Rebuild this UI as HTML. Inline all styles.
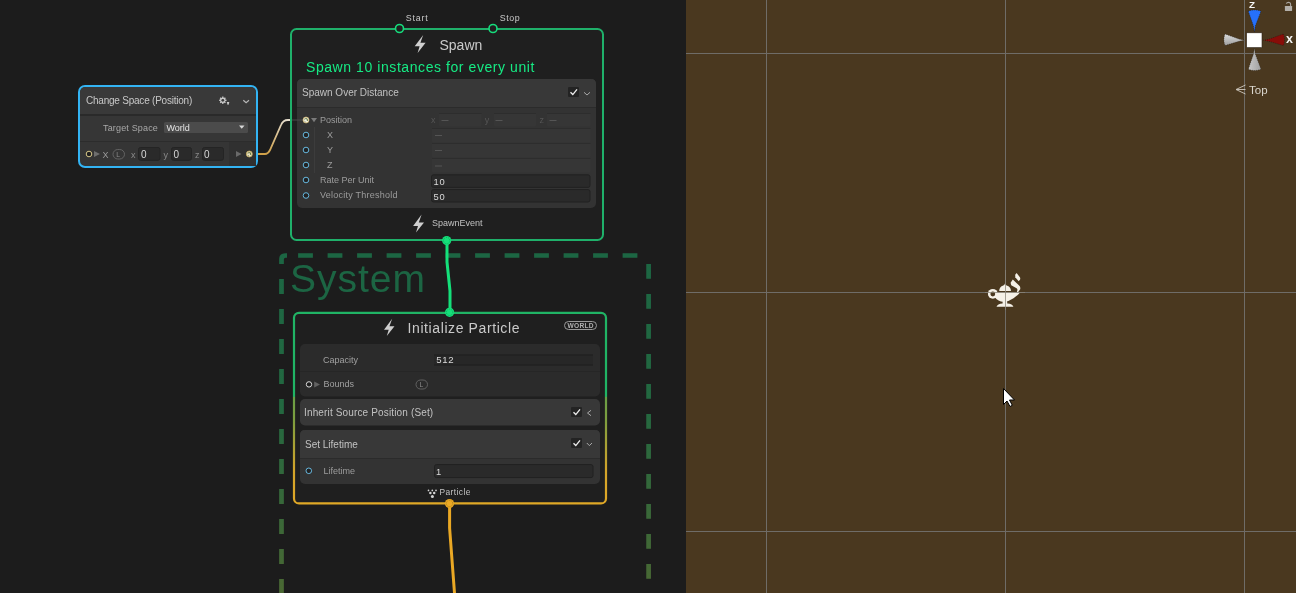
<!DOCTYPE html>
<html><head><meta charset="utf-8">
<style>
html,body{margin:0;padding:0;width:1296px;height:593px;overflow:hidden;background:#1c1c1c;}
svg{display:block;font-family:"Liberation Sans",sans-serif;-webkit-font-smoothing:antialiased;will-change:transform;}
</style></head>
<body>
<svg width="1296" height="593" viewBox="0 0 1296 593">
<defs>
  <linearGradient id="wireCS" x1="0" y1="154" x2="0" y2="120" gradientUnits="userSpaceOnUse">
    <stop offset="0" stop-color="#cfa048"/><stop offset="1" stop-color="#e4dccb"/>
  </linearGradient>
  <linearGradient id="initBorder" x1="0" y1="311" x2="0" y2="505" gradientUnits="userSpaceOnUse">
    <stop offset="0.44" stop-color="#20b465"/>
    <stop offset="0.445" stop-color="#6a9e45"/>
    <stop offset="0.56" stop-color="#7d9e3f"/>
    <stop offset="0.82" stop-color="#d3a42a"/>
    <stop offset="1" stop-color="#e0a826"/>
  </linearGradient>
  <linearGradient id="sysBorderL" x1="0" y1="253" x2="0" y2="593" gradientUnits="userSpaceOnUse">
    <stop offset="0" stop-color="#1c6643"/><stop offset="0.45" stop-color="#236840"/><stop offset="1" stop-color="#4a6833"/>
  </linearGradient>
</defs>

<!-- ===== Scene view ===== -->
<rect x="686" y="0" width="610" height="593" fill="#4a381f"/>
<g fill="#6f6c67">
  <rect x="766" y="0" width="1" height="593"/>
  <rect x="1005" y="0" width="1" height="593"/>
  <rect x="1244" y="0" width="1" height="593"/>
  <rect x="686" y="53" width="610" height="1"/>
  <rect x="686" y="292" width="610" height="1"/>
  <rect x="686" y="531" width="610" height="1"/>
</g>

<!-- ===== System dashed frame ===== -->
<g fill="none" stroke="url(#sysBorderL)" stroke-width="4.7">
  <path d="M281.5 264 V259.5 Q281.5 255.5 285.5 255.5 H287" />
  <line x1="298.1" y1="255.5" x2="651" y2="255.5" stroke-dasharray="14.8 14.7"/>
  <line x1="648.6" y1="264" x2="648.6" y2="593" stroke-dasharray="14.8 15.2"/>
  <line x1="281.5" y1="279" x2="281.5" y2="593" stroke-dasharray="15 15"/>
</g>
<text x="290" y="291.8" font-size="39" fill="#1c6543" textLength="135" lengthAdjust="spacing">System</text>

<!-- ===== Change Space node ===== -->
<rect x="79" y="86" width="178" height="81" rx="6" fill="#353535" stroke="#33b4f4" stroke-width="2"/>
<path d="M80 114 V93 Q80 87 86 87 H250 Q256 87 256 93 V114 Z" fill="#393939"/>
<rect x="80" y="114" width="176" height="2" fill="#2a2a2a"/>
<rect x="80" y="116" width="176" height="25" fill="#363636"/>
<rect x="80" y="141" width="176" height="1" fill="#2c2c2c"/>
<text x="86" y="104" font-size="10" fill="#c8c8c8" textLength="106.3" lengthAdjust="spacing">Change Space (Position)</text>
<!-- gear -->
<g fill="#c8c8c8">
  <circle cx="222.8" cy="100.3" r="2.7"/>
  <g stroke="#c8c8c8" stroke-width="1.3">
    <line x1="222.8" y1="96.6" x2="222.8" y2="104"/><line x1="219.1" y1="100.3" x2="226.5" y2="100.3"/>
    <line x1="220.2" y1="97.7" x2="225.4" y2="102.9"/><line x1="225.4" y1="97.7" x2="220.2" y2="102.9"/>
  </g>
  <circle cx="222.8" cy="100.3" r="1.4" fill="#393939"/>
  <path d="M226.8 102 H229.3 L228.6 104.8 H227.5 Z"/>
</g>
<path d="M243.3 100.2 L246.1 102.6 L249 100.2" fill="none" stroke="#b8b8b8" stroke-width="1.2"/>
<text x="103" y="131" font-size="9" fill="#a8a8a8" textLength="54.8" lengthAdjust="spacing">Target Space</text>
<rect x="164" y="122" width="84" height="11" rx="1.5" fill="#4b4b4b"/>
<text x="166.5" y="130.5" font-size="9" fill="#e4e4e4">World</text>
<path d="M239 125.5 H244.5 L241.75 128.8 Z" fill="#d8d8d8"/>
<!-- row 2 -->
<rect x="229" y="142" width="27" height="24" fill="#303030"/>
<circle cx="89" cy="154" r="2.8" fill="#1f1f1f" stroke="#d8c888" stroke-width="1"/>
<path d="M94 151 L100 154 L94 157 Z" fill="#6e6e6e"/>
<text x="102.5" y="157.5" font-size="9" fill="#9a9a9a">X</text>
<rect x="113" y="149.5" width="11.5" height="9.5" rx="4.75" fill="none" stroke="#666" stroke-width="0.9"/>
<text x="116.3" y="157" font-size="6.8" fill="#8c8c8c">L</text>
<text x="131" y="157.5" font-size="9" fill="#8a8a8a">x</text>
<rect x="138.5" y="147.5" width="21.5" height="12.8" rx="2" fill="#2a2a2a" stroke="#242424" stroke-width="1"/>
<text x="141" y="157.5" font-size="10" fill="#d8d8d8">0</text>
<text x="163.5" y="157.5" font-size="9" fill="#8a8a8a">y</text>
<rect x="171.5" y="147.5" width="20" height="12.8" rx="2" fill="#2a2a2a" stroke="#242424" stroke-width="1"/>
<text x="173.5" y="157.5" font-size="10" fill="#d8d8d8">0</text>
<text x="195" y="157.5" font-size="9" fill="#8a8a8a">z</text>
<rect x="202.5" y="147.5" width="21" height="12.8" rx="2" fill="#2a2a2a" stroke="#242424" stroke-width="1"/>
<text x="204" y="157.5" font-size="10" fill="#d8d8d8">0</text>
<path d="M236 151 L241.5 154 L236 157 Z" fill="#6a6a6a"/>
<circle cx="249.3" cy="154" r="3" fill="#e8e0c0" stroke="#c4a85a" stroke-width="0.8"/>
<path d="M247.6 153.2 Q248.8 152.3 250.5 152.8 L250.7 155 M247.9 155.3 L248.7 155.8" fill="none" stroke="#5a6a30" stroke-width="0.9"/>

<!-- wire change space -> spawn position -->
<path d="M258 154 H265 Q268 154 270 150 L281 125 Q283 120 288 120 H292" fill="none" stroke="url(#wireCS)" stroke-width="1.8"/>

<!-- ===== Spawn context ===== -->
<rect x="291" y="29" width="312" height="211" rx="5.5" fill="#1f1f1f" stroke="#1fb06a" stroke-width="2"/>
<!-- start/stop ports -->
<circle cx="399.5" cy="28.5" r="4" fill="#1f1f1f" stroke="#16dc7c" stroke-width="1.6"/>
<circle cx="493" cy="28.5" r="4" fill="#1f1f1f" stroke="#16dc7c" stroke-width="1.6"/>
<text x="405.8" y="21.1" font-size="8.9" fill="#c8c8c8" textLength="21.8" lengthAdjust="spacing">Start</text>
<text x="499.8" y="21.1" font-size="8.9" fill="#c8c8c8" textLength="19.8" lengthAdjust="spacing">Stop</text>
<!-- bolt -->
<path d="M423.2 35 L414.7 46.3 H419.6 L417.6 53 L425.6 42.8 H420.4 Z" fill="#cfcfcf"/>
<text x="439.5" y="50" font-size="14" fill="#cacaca">Spawn</text>
<text x="306" y="72" font-size="14" fill="#16ea84" letter-spacing="0.57">Spawn 10 instances for every unit</text>

<!-- block -->
<rect x="297" y="79" width="299" height="129" rx="5" fill="#333333"/>
<path d="M297 107 V84 Q297 79 302 79 H591 Q596 79 596 84 V107 Z" fill="#383838"/>
<rect x="297" y="107" width="299" height="1" fill="#2b2b2b"/>
<text x="302" y="96" font-size="10" fill="#c2c2c2">Spawn Over Distance</text>
<rect x="568" y="87" width="11" height="10" rx="1" fill="#232323"/>
<path d="M570.5 92.3 L572.8 94.6 L577 89.3" fill="none" stroke="#ececec" stroke-width="1.35"/>
<path d="M584 92.3 L587 95 L590 92.3" fill="none" stroke="#a8a8a8" stroke-width="1"/>

<!-- wire stub inside -->
<rect x="292" y="119.5" width="11" height="1" fill="#4a4a4a"/>
<!-- ports -->
<circle cx="306" cy="120" r="3" fill="#f2efe2" stroke="#cfb268" stroke-width="0.7"/>
<path d="M304.3 119.2 Q305.5 118.3 307.2 118.8 L307.4 121 M304.6 121.3 L305.4 121.8" fill="none" stroke="#4e6a30" stroke-width="0.9"/>
<g fill="#222" stroke="#6cc4ee" stroke-width="0.9">
  <circle cx="306" cy="135" r="2.8"/>
  <circle cx="306" cy="150" r="2.8"/>
  <circle cx="306" cy="165" r="2.8"/>
  <circle cx="306" cy="180" r="2.8"/>
  <circle cx="306" cy="195.5" r="2.8"/>
</g>
<path d="M311 118 H317 L314 122.3 Z" fill="#7a7a7a"/>
<rect x="314" y="127" width="1" height="46" fill="#3c3c3c"/>
<g font-size="9" fill="#9c9c9c">
  <text x="320" y="123.3">Position</text>
  <text x="327" y="138.3">X</text>
  <text x="327" y="153.3">Y</text>
  <text x="327" y="168.3">Z</text>
  <text x="320" y="183.3">Rate Per Unit</text>
  <text x="320" y="198" textLength="77.4" lengthAdjust="spacing">Velocity Threshold</text>
</g>
<!-- disabled position fields -->
<g fill="#363636">
  <rect x="439" y="113" width="42.5" height="13.5" rx="1"/>
  <rect x="494" y="113" width="42" height="13.5" rx="1"/>
  <rect x="547" y="113" width="43.5" height="13.5" rx="1"/>
  <rect x="432" y="128" width="158.5" height="14.5" rx="1"/>
  <rect x="432" y="143" width="158.5" height="14.5" rx="1"/>
  <rect x="432" y="158" width="158.5" height="14.5" rx="1"/>
</g>
<g fill="#2d2d2d">
  <rect x="439" y="113" width="42.5" height="1"/>
  <rect x="494" y="113" width="42" height="1"/>
  <rect x="547" y="113" width="43.5" height="1"/>
  <rect x="432" y="128" width="158.5" height="1"/>
  <rect x="432" y="143" width="158.5" height="1"/>
  <rect x="432" y="158" width="158.5" height="1"/>
</g>
<g font-size="9" fill="#555555">
  <text x="431" y="123">x</text><text x="484.7" y="123">y</text><text x="539.6" y="123">z</text>
</g>
<g fill="#555555">
  <rect x="441.5" y="120" width="7" height="1"/>
  <rect x="495.5" y="120" width="7" height="1"/>
  <rect x="549.5" y="120" width="7" height="1"/>
  <rect x="435" y="135" width="7" height="1"/>
  <rect x="435" y="150" width="7" height="1"/>
  <rect x="435" y="165.5" width="7" height="1"/>
</g>
<rect x="431.5" y="174.8" width="158.5" height="12.6" rx="2" fill="#2a2a2a" stroke="#212121" stroke-width="1"/>
<rect x="431.5" y="189.6" width="158.5" height="12.4" rx="2" fill="#2a2a2a" stroke="#212121" stroke-width="1"/>
<text x="433.6" y="185" font-size="9.4" fill="#dadada" textLength="11" lengthAdjust="spacing">10</text>
<text x="433.6" y="199.7" font-size="9.4" fill="#dadada" textLength="11" lengthAdjust="spacing">50</text>

<!-- footer -->
<path d="M423.2 35 L414.7 46.3 H419.6 L417.6 53 L425.6 42.8 H420.4 Z" fill="#cfcfcf" transform="translate(-1.6 179.6)"/>
<text x="432" y="226" font-size="9" fill="#c0c0c0">SpawnEvent</text>

<!-- wire spawn -> init -->
<path d="M447 241 V262 L450 291 V312" fill="none" stroke="#14e07a" stroke-width="3" stroke-linejoin="round"/>
<circle cx="446.7" cy="240.6" r="4.6" fill="#14e07a"/><circle cx="446.7" cy="240.6" r="3.2" fill="none" stroke="#0c8a4c" stroke-width="0.7" stroke-dasharray="0.9 1.1"/>

<!-- ===== Initialize Particle context ===== -->
<rect x="294" y="312.8" width="312" height="190.6" rx="5" fill="#1f1f1f" stroke="url(#initBorder)" stroke-width="2.2"/>
<circle cx="449.6" cy="312.3" r="4.6" fill="#14e07a"/><circle cx="449.6" cy="312.3" r="3.2" fill="none" stroke="#0c8a4c" stroke-width="0.7" stroke-dasharray="0.9 1.1"/>
<path d="M423.2 35 L414.7 46.3 H419.6 L417.6 53 L425.6 42.8 H420.4 Z" fill="#cfcfcf" transform="translate(384 318.8) scale(0.96) translate(-414.7 -35)"/>
<text x="407.5" y="332.7" font-size="14" fill="#cacaca" letter-spacing="0.6">Initialize Particle</text>
<rect x="564.5" y="321.5" width="32" height="8" rx="4" fill="none" stroke="#9a9a9a" stroke-width="1"/>
<text x="567.5" y="328.3" font-size="6.6" font-weight="bold" fill="#b0b0b0" letter-spacing="0.3">WORLD</text>

<!-- block capacity/bounds -->
<rect x="300" y="344" width="300" height="52.5" rx="5" fill="#2b2b2b"/>
<rect x="300" y="371" width="300" height="1" fill="#262626"/>
<text x="323" y="362.5" font-size="9" fill="#a0a0a0">Capacity</text>
<rect x="434" y="354.5" width="159" height="11" fill="#272727"/>
<rect x="434" y="354.5" width="159" height="1" fill="#1e1e1e"/>
<rect x="434" y="364.5" width="159" height="1" fill="#1e1e1e"/>
<text x="436.3" y="363.2" font-size="9.6" fill="#dadada" textLength="17.3" lengthAdjust="spacing">512</text>
<circle cx="309" cy="384.4" r="2.7" fill="#1e1e1e" stroke="#dcdcdc" stroke-width="1"/>
<path d="M314.2 381.4 L320 384.4 L314.2 387.4 Z" fill="#626262"/>
<text x="323.5" y="387.3" font-size="9" fill="#a0a0a0">Bounds</text>
<rect x="416" y="380" width="11.5" height="9" rx="4.5" fill="none" stroke="#666" stroke-width="0.9"/>
<text x="419.5" y="387" font-size="6.8" fill="#8c8c8c">L</text>

<!-- block inherit -->
<rect x="300" y="399" width="300" height="26.5" rx="5" fill="#383838"/>
<text x="304" y="416.3" font-size="10" fill="#c2c2c2" textLength="129.2" lengthAdjust="spacing">Inherit Source Position (Set)</text>
<rect x="571" y="407" width="11" height="10" rx="1" fill="#232323"/>
<path d="M573.5 412.3 L575.8 414.6 L580 409.3" fill="none" stroke="#ececec" stroke-width="1.35"/>
<path d="M591 410.3 L587.5 413 L591 415.7" fill="none" stroke="#a8a8a8" stroke-width="1"/>

<!-- block set lifetime -->
<rect x="300" y="430" width="300" height="54" rx="5" fill="#333333"/>
<path d="M300 458 V435 Q300 430 305 430 H595 Q600 430 600 435 V458 Z" fill="#383838"/>
<rect x="300" y="458" width="300" height="1" fill="#2b2b2b"/>
<text x="305" y="447.5" font-size="10" fill="#c2c2c2">Set Lifetime</text>
<rect x="571" y="438" width="11" height="10" rx="1" fill="#232323"/>
<path d="M573.5 443.3 L575.8 445.6 L580 440.3" fill="none" stroke="#ececec" stroke-width="1.35"/>
<path d="M586.8 443 L589.4 445.6 L592 443" fill="none" stroke="#a8a8a8" stroke-width="1"/>
<circle cx="308.8" cy="470.8" r="2.8" fill="#222" stroke="#6cc4ee" stroke-width="0.9"/>
<text x="323.5" y="474.3" font-size="9" fill="#9c9c9c">Lifetime</text>
<rect x="434.5" y="464.6" width="158.5" height="13" rx="2" fill="#2a2a2a" stroke="#212121" stroke-width="1"/>
<text x="436" y="475" font-size="9.4" fill="#dadada">1</text>

<!-- footer particle -->
<g fill="#d4d4d4">
  <circle cx="428.5" cy="490.4" r="0.85"/><circle cx="432.3" cy="490.4" r="0.85"/><circle cx="436" cy="490.4" r="0.85"/>
  <circle cx="430.4" cy="493.1" r="1.25"/><circle cx="434.2" cy="493.1" r="1.25"/>
  <circle cx="432.4" cy="496.5" r="1.5"/>
</g>
<text x="439.4" y="494.9" font-size="8.4" fill="#c4c4c4" textLength="31" lengthAdjust="spacing">Particle</text>

<!-- orange wire -->
<path d="M449.6 505 V528 L454.5 593" fill="none" stroke="#eaa824" stroke-width="3" stroke-linejoin="round"/>
<circle cx="449.5" cy="503.5" r="4.6" fill="#eaa824"/><circle cx="449.5" cy="503.5" r="3.2" fill="none" stroke="#8a6a1c" stroke-width="0.7" stroke-dasharray="0.9 1.1"/>

<!-- ===== Scene gizmo ===== -->
<defs>
  <linearGradient id="gz" x1="0" y1="0" x2="0" y2="1"><stop offset="0" stop-color="#dcdcdc"/><stop offset="1" stop-color="#9c9c9c"/></linearGradient>
  <linearGradient id="gzh" x1="0" y1="0" x2="1" y2="0"><stop offset="0" stop-color="#c8c8c8"/><stop offset="1" stop-color="#a0a0a0"/></linearGradient>
</defs>
<g>
  <path d="M1248.3 11.2 Q1254.6 8.6 1261 11.2 L1255.3 26 L1254.4 32 L1253.5 26 Z" fill="#2670fa" stroke="#111" stroke-width="0.5" stroke-dasharray="0.8 1.2"/>
  <path d="M1283.4 34 Q1285.6 39.8 1283.4 45.6 L1269 41.3 L1263.6 40.2 L1269 39.1 Z" fill="#880d08" stroke="#111" stroke-width="0.5" stroke-dasharray="0.8 1.2"/>
  <path d="M1225 34 Q1222.8 39.8 1225 45.6 L1239 41.3 L1244.3 40.2 L1239 39.1 Z" fill="url(#gz)" stroke="#111" stroke-width="0.5" stroke-dasharray="0.8 1.2"/>
  <path d="M1248.3 69.2 Q1254.6 71.8 1261 69.2 L1255.3 54 L1254.4 48 L1253.5 54 Z" fill="url(#gzh)" stroke="#111" stroke-width="0.5" stroke-dasharray="0.8 1.2"/>
  <rect x="1246.6" y="32.8" width="15.4" height="14.8" fill="#ffffff" stroke="#2a2014" stroke-width="0.6"/>
  <text x="1249" y="8.2" font-size="9.8" font-weight="bold" fill="#f6f6f6">Z</text>
  <text x="1286" y="43.2" font-size="12.5" font-weight="bold" fill="#f6f6f6">x</text>
  <!-- lock -->
  <rect x="1284.9" y="6.1" width="7.2" height="4.9" rx="0.4" fill="#b4b0aa"/>
  <path d="M1290.6 6.3 V4.2 Q1290.6 2.4 1288.5 2.4 Q1286.8 2.4 1286.3 3.6" fill="none" stroke="#aaa6a0" stroke-width="1.1"/>
</g>
<path d="M1245.5 85 L1236 89.5 L1245.5 94 M1236.5 89.5 H1245.5" fill="none" stroke="#cfcac0" stroke-width="0.9"/>
<text x="1249" y="93.8" font-size="11.5" fill="#dad6ce">Top</text>

<!-- lamp -->
<g fill="#f5f1e8">
  <circle cx="992.8" cy="293.8" r="4.9"/>
  <path d="M996.5 292.6 H1020 Q1018.5 295 1013.5 298.2 Q1008.5 301.8 1003.5 301.8 Q998 301.6 995 297.5 Z"/>
  <path d="M999.2 291 Q999.3 286.8 1003.3 285.5 Q1004.6 285 1005 283.6 Q1005.4 285 1006.7 285.5 Q1010.8 286.8 1011 291 Z"/>
  <rect x="1002.6" y="301" width="4.6" height="3"/>
  <path d="M996.5 306.8 Q997.5 303.6 1002.5 303.4 H1007.5 Q1012.5 303.6 1013.4 306.8 Z"/>
  <path d="M1010.6 282.8 L1012.8 279.6 L1019.6 286 Q1020.6 287.5 1020.2 289.2 L1018 292.2 H1016.8 L1017.4 290 Q1017.6 289.3 1016.6 288.3 L1011.2 285.2 Z"/>
  <path d="M1015.2 274.8 L1016.6 273 L1019.9 277.3 Q1020.5 278.4 1020.1 279.5 L1018.7 281.3 L1015.3 277.2 Z"/>
</g>
<circle cx="992.8" cy="294" r="2.4" fill="#4a381f"/>
<rect x="1005" y="270" width="1" height="40" fill="#8a8478" opacity="0.75"/>
<rect x="985" y="292" width="40" height="1" fill="#8a8478" opacity="0.75"/>

<!-- cursor -->
<path d="M1003.5 388.5 V404.5 L1007 401 L1010 406.5 L1012.3 405.3 L1009.5 400 H1014.5 Z" fill="#ffffff" stroke="#000000" stroke-width="1"/>
</svg>
</body></html>
